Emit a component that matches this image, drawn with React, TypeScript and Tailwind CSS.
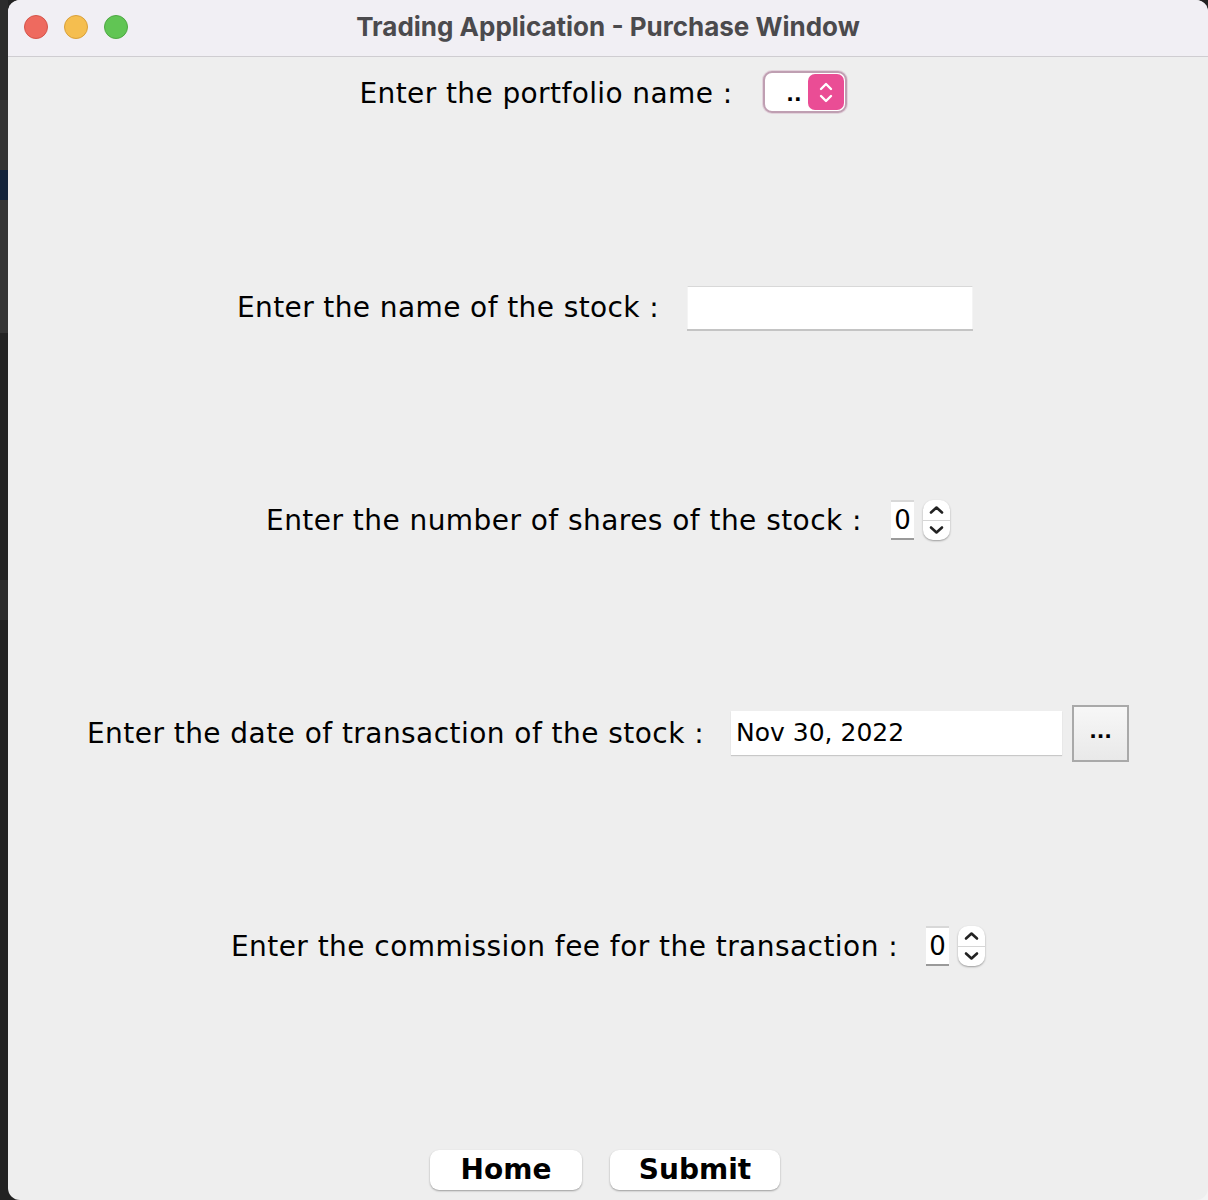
import React from "react";

const labelFont = { fontFamily: '"DejaVu Sans", "Liberation Sans", sans-serif' };

function Spinner({ value }: { value: string }) {
  return (
    <div className="flex items-center gap-[9px]">
      <div className="w-[23px] h-[40px] bg-white flex items-center justify-center text-[26px] text-black border-t-2 border-b-2 border-t-[#d8d8d8] border-b-[#9a9a9a]" style={labelFont}>
        {value}
      </div>
      <div className="w-[27px] h-[40px] bg-white rounded-[10px] shadow-[0_1px_2px_rgba(0,0,0,0.35)] flex flex-col">
        <div className="flex-1 flex items-center justify-center border-b border-[#d6d6d6]">
          <svg width="15" height="10" viewBox="0 0 15 10"><path d="M2 7.5 L7.5 2.5 L13 7.5" fill="none" stroke="#222" strokeWidth="2.6" strokeLinecap="round" strokeLinejoin="round" /></svg>
        </div>
        <div className="flex-1 flex items-center justify-center">
          <svg width="15" height="10" viewBox="0 0 15 10"><path d="M2 2.5 L7.5 7.5 L13 2.5" fill="none" stroke="#222" strokeWidth="2.6" strokeLinecap="round" strokeLinejoin="round" /></svg>
        </div>
      </div>
    </div>
  );
}

export default function App() {
  return (
    <div className="relative w-[1208px] h-[1200px] bg-[#222222] overflow-hidden">
      {/* background strip left */}
      <div className="absolute left-0 top-0 w-[8px] h-[1200px] flex flex-col overflow-hidden">
        <div className="h-[100px] bg-[#2c2c2c]" />
        <div className="h-[70px] bg-[#333333]" />
        <div className="h-[30px] bg-[#13233a]" />
        <div className="h-[133px] bg-[#343434]" />
        <div className="h-[247px] bg-[#232323]" />
        <div className="h-[40px] bg-[#2d2d2d]" />
        <div className="h-[580px] bg-[#222222]" />
      </div>
      <div className="absolute right-0 bottom-0 w-[14px] h-[14px] bg-[#f4f4f4]" />
      {/* window */}
      <div className="absolute left-[8px] top-0 w-[1200px] h-[1200px] bg-[#eeeeee] rounded-[12px] overflow-hidden flex flex-col">
        <div className="relative h-[57px] bg-[#f1eff4] border-b border-[#cfcdd1] flex items-center justify-center shrink-0">
          <div className="absolute left-[16px] top-[15px] flex gap-[16px]">
            <div className="w-[24px] h-[24px] rounded-full bg-[#ee6a5f] border border-[#d5544a]" />
            <div className="w-[24px] h-[24px] rounded-full bg-[#f5be4f] border border-[#d9a03a]" />
            <div className="w-[24px] h-[24px] rounded-full bg-[#61c554] border border-[#4ea843]" />
          </div>
          <div className="text-[26px] font-bold text-[#4b4a4d] -mt-[3px]" style={{ fontFamily: 'Inter, "Liberation Sans", sans-serif' }}>
            Trading Application - Purchase Window
          </div>
        </div>

        <div className="flex flex-col text-black" style={labelFont}>
          {/* row 1 */}
          <div className="h-[70px] flex items-center justify-center gap-[30px] pr-[10px]">
            <span className="text-[28px] tracking-[0.4px] mt-[3px]">Enter the portfolio name :</span>
            <div className="w-[84px] h-[42px] rounded-[9px] border-2 border-[#bf9fb2] bg-white flex items-center justify-end pr-[1px] shadow-[0_0_0_1px_#e2d2db]">
              <span className="text-[20px] font-bold mr-[6px] mt-[4px] leading-none">..</span>
              <div className="w-[36px] h-[36px] rounded-[7px] bg-[#ea4d95] flex flex-col items-center justify-center gap-[3px]">
                <svg width="14" height="9" viewBox="0 0 14 9"><path d="M2 7 L7 2 L12 7" fill="none" stroke="white" strokeWidth="2.4" strokeLinecap="round" strokeLinejoin="round" /></svg>
                <svg width="14" height="9" viewBox="0 0 14 9"><path d="M2 2 L7 7 L12 2" fill="none" stroke="white" strokeWidth="2.4" strokeLinecap="round" strokeLinejoin="round" /></svg>
              </div>
            </div>
          </div>

          {/* row 2 */}
          <div className="h-[70px] mt-[145px] flex items-center justify-center gap-[28px] pr-[6px]">
            <span className="text-[28px] tracking-[0.4px] mt-[2px]">Enter the name of the stock :</span>
            <div className="w-[286px] h-[43px] bg-white border-t border-[#d8d8d8] border-l border-r border-l-[#f4f4f4] border-r-[#f4f4f4] shadow-[0_2px_0_#c4c4c4]" />
          </div>

          {/* row 3 */}
          <div className="h-[70px] mt-[143px] flex items-center justify-center gap-[29px]">
            <span className="text-[28px] tracking-[0.45px] mt-[2px]">Enter the number of shares of the stock :</span>
            <Spinner value="0" />
          </div>

          {/* row 4 */}
          <div className="h-[70px] mt-[143px] flex items-center justify-center">
            <span className="text-[28px] tracking-[0.45px] mr-[27px] mt-[2px]">Enter the date of transaction of the stock :</span>
            <div className="w-[331px] h-[44px] bg-white shadow-[0_1px_1px_#c8c8c8] flex items-center pl-[5px] text-[25px]">Nov 30, 2022</div>
            <div className="ml-[10px] w-[57px] h-[57px] border-2 border-[#a9a9a9] bg-gradient-to-b from-[#f7f7f7] to-[#e9e9e9] flex items-center justify-center font-bold text-[20px] leading-none">
              <span className="-mt-[4px]">...</span>
            </div>
          </div>

          {/* row 5 */}
          <div className="h-[70px] mt-[143px] flex items-center justify-center gap-[28px]">
            <span className="text-[28px] tracking-[0.45px] mt-[2px]">Enter the commission fee for the transaction :</span>
            <Spinner value="0" />
          </div>

          {/* buttons */}
          <div className="h-[40px] mt-[169px] flex items-center justify-center gap-[28px] pr-[6px]">
            <div className="w-[152px] h-[40px] bg-white rounded-[9px] shadow-[0_1px_2px_rgba(0,0,0,0.35)] flex items-center justify-center text-[28px] font-bold">Home</div>
            <div className="w-[170px] h-[40px] bg-white rounded-[9px] shadow-[0_1px_2px_rgba(0,0,0,0.35)] flex items-center justify-center text-[28px] font-bold">Submit</div>
          </div>
        </div>
      </div>
    </div>
  );
}
